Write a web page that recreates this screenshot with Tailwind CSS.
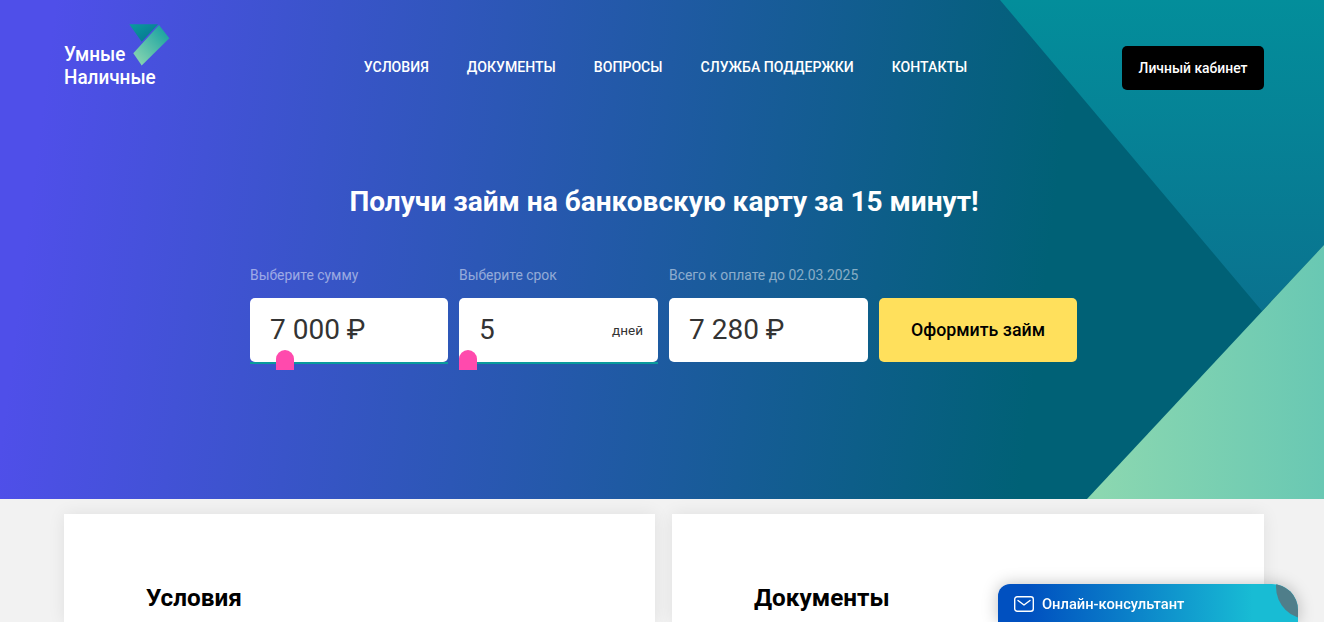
<!DOCTYPE html>
<html lang="ru">
<head>
    <meta charset="UTF-8">
    <meta name="viewport" content="width=device-width, initial-scale=1.0">
    <title>Умные Наличные</title>
    <script src="https://cdn.jsdelivr.net/npm/@tailwindcss/browser@4"></script>
</head>
<body class="h-[622px] overflow-hidden bg-[#f2f2f2] font-['Roboto',sans-serif]">
    <!-- Hero -->
    <section class="relative h-[499px] overflow-hidden bg-[linear-gradient(97deg,#4f4fe9_4%,#006176_78%)]">
        <svg class="absolute inset-0" width="1324" height="499" viewBox="0 0 1324 499">
            <defs>
                <linearGradient id="topTri" x1="0" y1="0" x2="0" y2="1">
                    <stop offset="0" stop-color="#038e9b"/>
                    <stop offset="1" stop-color="#0a728f"/>
                </linearGradient>
                <linearGradient id="bottomTri" x1="0" y1="0" x2="1" y2="0">
                    <stop offset="0" stop-color="#8dd8b0"/>
                    <stop offset="1" stop-color="#69c8b3"/>
                </linearGradient>
            </defs>
            <polygon points="1000,0 1324,0 1324,245 1262,311" fill="url(#topTri)"/>
            <polygon points="1087,499 1324,245 1324,499" fill="url(#bottomTri)"/>
        </svg>

        <div class="relative pl-[64px] pr-[60px]">
            <!-- Header -->
            <header class="flex h-[134px] items-center justify-between">
                <a href="#" class="relative block h-[66px] w-[106px] -translate-y-[10px]">
                    <svg class="absolute left-[65px] top-0" width="42" height="44" viewBox="129 24 42 44">
                        <defs>
                            <linearGradient id="logoBand" x1="0" y1="1" x2="1" y2="0">
                                <stop offset="0" stop-color="#93dab2"/>
                                <stop offset="1" stop-color="#0a9c9e"/>
                            </linearGradient>
                            <linearGradient id="logoTri" x1="0" y1="0" x2="1" y2="1">
                                <stop offset="0" stop-color="#0a9c9e"/>
                                <stop offset="1" stop-color="#06708f"/>
                            </linearGradient>
                        </defs>
                        <polygon points="129.3,24.3 158,24.3 141.7,41.7" fill="url(#logoTri)"/>
                        <polygon points="159,25 169.3,38.3 141.7,65.5 133.3,53.3" fill="url(#logoBand)"/>
                    </svg>
                    <span class="absolute left-0 top-[19px] origin-left scale-x-[0.9] whitespace-nowrap text-[21px] font-medium leading-[23px] text-white">Умные<br>Наличные</span>
                </a>
                <nav class="ml-[39px] flex translate-y-[1px] items-center gap-[38px] text-[14.1px] font-medium uppercase text-white">
                    <a href="#">Условия</a>
                    <a href="#">Документы</a>
                    <a href="#">Вопросы</a>
                    <a href="#">Служба поддержки</a>
                    <a href="#">Контакты</a>
                </nav>
                <a href="#" class="flex h-[44px] w-[142px] translate-y-[1px] items-center justify-center rounded-[5px] bg-black text-[13.9px] font-medium text-white">Личный кабинет</a>
            </header>

            <h1 class="mt-[51px] text-center text-[28.05px] font-bold leading-[34px] text-white">Получи займ на банковскую карту за 15 минут!</h1>

            <!-- Calculator -->
            <form class="ml-[186px] mt-[46px] grid w-[827px] grid-cols-[198px_199px_199px_198px] gap-x-[11px] gap-y-[13px]">
                <label class="text-[13.9px] leading-5 text-white/50">Выберите сумму</label>
                <label class="text-[13.9px] leading-5 text-white/50">Выберите срок</label>
                <label class="col-span-2 text-[13.9px] leading-5 text-white/50">Всего к оплате до 02.03.2025</label>

                <div class="relative h-[66px] border-b-2 border-[#0a9a9c]">
                    <div class="flex h-[64px] items-center rounded-[5px] bg-white pl-[20px] text-[28px] text-[#333]">7 000 ₽</div>
                    <span class="absolute left-[26px] top-[52px] h-[20px] w-[18px] rounded-t-[9px] bg-[#ff4aad]"></span>
                </div>
                <div class="relative h-[66px] border-b-2 border-[#0a9a9c]">
                    <div class="flex h-[64px] items-center justify-between rounded-[5px] bg-white pl-[20px] pr-[15px] text-[28px] text-[#333]">5<span class="text-[13.5px]">дней</span></div>
                    <span class="absolute left-0 top-[52px] h-[20px] w-[18px] rounded-t-[9px] bg-[#ff4aad]"></span>
                </div>
                <div class="flex h-[64px] items-center rounded-[5px] bg-white pl-[20px] text-[28px] text-[#333]">7 280 ₽</div>
                <button type="button" class="h-[64px] rounded-[5px] bg-[#ffe05c] text-[17.8px] font-medium text-black">Оформить займ</button>
            </form>
        </div>
    </section>

    <!-- Cards -->
    <section class="flex gap-[17px] pl-[64px] pr-[60px] pt-[15px]">
        <div class="h-[108px] w-[591px] bg-white pl-[82px] pt-[68px] shadow-[0_0_16px_rgba(0,0,0,0.08)]">
            <h2 class="text-[24.3px] font-bold leading-8 text-black">Условия</h2>
        </div>
        <div class="h-[108px] w-[592px] bg-white pl-[82px] pt-[68px] shadow-[0_0_16px_rgba(0,0,0,0.08)]">
            <h2 class="text-[24.3px] font-bold leading-8 text-black">Документы</h2>
        </div>
    </section>

    <!-- Chat widget -->
    <div class="fixed left-[998px] top-[584px] flex h-[38px] w-[300px] items-start gap-[8px] overflow-hidden rounded-tl-[12px] rounded-tr-[26px] bg-[linear-gradient(90deg,#0050c0_10%,#18bcd4_85%)] pl-[16px] pt-[11px] shadow-[0_0_16px_rgba(0,0,0,0.25)]">
        <svg class="mt-[1px]" width="20" height="16" viewBox="0 0 20 16" fill="none" stroke="white" stroke-width="1.4">
            <rect x="0.7" y="0.7" width="18.6" height="14.6" rx="2.5"/>
            <path d="M4 4.5l6 4.5 6-4.5" stroke-linecap="round" stroke-linejoin="round"/>
        </svg>
        <span class="text-[14.7px] font-medium leading-[19px] text-white">Онлайн-консультант</span>
        <span class="absolute left-[278px] top-[-29px] h-[64px] w-[64px] rounded-full bg-[#4f7e8a]"></span>
    </div>
</body>
</html>
